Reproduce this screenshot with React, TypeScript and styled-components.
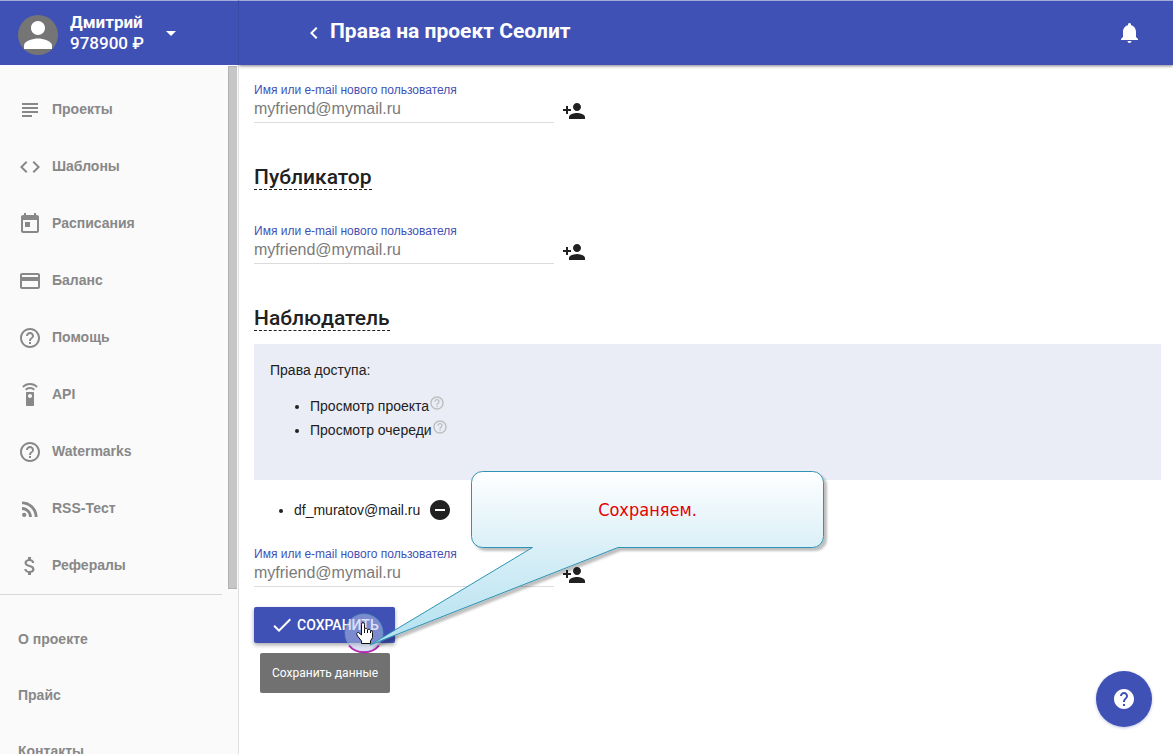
import React, { useId } from "react";
import styled, { createGlobalStyle } from "styled-components";
import {
  MdArrowDropDown,
  MdAttachMoney,
  MdCheck,
  MdChevronLeft,
  MdCode,
  MdHelp,
  MdHelpOutline,
  MdPayment,
  MdPerson,
  MdPersonAdd,
  MdRemoveCircle,
  MdRssFeed,
  MdSettingsRemote,
  MdSubject,
} from "react-icons/md";

const sans = `"Liberation Sans", Arial, sans-serif`;
const roboto = `Roboto, "Liberation Sans", sans-serif`;
const indigo = "#3f51b5";
const ink = "#212121";

const GlobalStyle = createGlobalStyle`
  * { box-sizing: border-box; }
  body { margin: 0; background: #fff; color: ${ink}; font: 14px/20px ${sans}; }
  button { border: 0; padding: 0; background: none; color: inherit; cursor: pointer; }
  svg { display: block; flex: none; }
`;

const Page = styled.div`
  display: grid;
  grid-template-columns: 239px minmax(0, 1fr);
  grid-template-rows: 65px minmax(0, 1fr);
  height: 100vh;
  overflow: hidden;
`;

const Profile = styled.div`
  display: flex;
  align-items: center;
  padding-left: 18px;
  background: ${indigo};
  color: #fff;
  border-top: 1px solid #a3acdb;
  border-right: 1px solid #3a4aa6;
  z-index: 2;
`;

const Avatar = styled.div`
  display: grid;
  place-content: center;
  width: 40px;
  height: 40px;
  margin-top: 4px;
  border-radius: 50%;
  background: #757575;
`;

const Account = styled.div`
  width: 89px;
  margin-left: 12px;
  font: 500 17px/21px ${roboto};
`;

const AccountName = styled.div`
  font-weight: 700;
`;

const IconButton = styled.button`
  display: grid;
  place-items: center;
  width: 24px;
  height: 24px;
`;

const TopBar = styled.header`
  display: flex;
  align-items: center;
  padding: 0 31px 0 63px;
  background: ${indigo};
  color: #fff;
  border-top: 1px solid #a3acdb;
  box-shadow: 0 1px 3px rgba(0, 0, 0, 0.5);
  z-index: 1;
`;

const PageTitle = styled.h1`
  flex: 1;
  margin: 0 0 4px 4px;
  font: 700 21px/24px ${roboto};
`;

const Sidebar = styled.aside`
  display: flex;
  background: #fafafa;
  border-right: 1px solid #e0e0e0;
  padding-right: 1px;
  overflow: hidden;
`;

const Menu = styled.nav`
  flex: 1;
`;

const MenuGroup = styled.div<{ $divided?: boolean }>`
  display: flex;
  flex-direction: column;
  margin-right: 6px;
  padding-top: 16px;
  border-top: ${(p) => (p.$divided ? "1px solid #d8d8d8" : "0")};
`;

const MenuLink = styled.a<{ $height: number }>`
  display: flex;
  align-items: center;
  gap: 10px;
  height: ${(p) => p.$height}px;
  padding-left: 18px;
  color: #888;
  font-weight: 700;
  text-decoration: none;
`;

const MenuText = styled.span`
  padding-bottom: 2px;
`;

const ScrollTrack = styled.div`
  width: 9px;
  padding-top: 1px;
`;

const ScrollThumb = styled.div`
  height: 76%;
  background: #c6c6c6;
  border: 1px solid #b2b2b2;
  border-right: 0;
`;

const Content = styled.main`
  padding: 18px 12px 0 15px;
  overflow: hidden;
`;

const FieldRow = styled.div`
  display: flex;
  align-items: flex-end;
  gap: 8px;
`;

const FieldBox = styled.div`
  display: flex;
  flex-direction: column;
  width: 300px;
`;

const FieldLabel = styled.label`
  color: ${indigo};
  font-size: 12px;
  line-height: 14px;
`;

const FieldInput = styled.input`
  height: 26px;
  padding: 0 0 2px;
  border: 0;
  border-bottom: 1px solid #dcdcdc;
  border-radius: 0;
  background: none;
  font: 16px/23px ${sans};
  outline: none;
  &::placeholder {
    color: #7a7a7a;
    opacity: 1;
  }
`;

const RoleSection = styled.section<{ $gap: number }>`
  margin-top: 42px;
  & > h2 {
    margin: 0 0 ${(p) => p.$gap}px;
  }
`;

const RoleTitle = styled.h2`
  width: fit-content;
  border-bottom: 1px dashed ${ink};
  font: 500 21px/24px ${roboto};
`;

const RightsPanel = styled.div`
  padding: 16px 16px 38px;
  background: #eaedf6;
`;

const RightsTitle = styled.p`
  margin: 0 0 14px;
`;

const BulletList = styled.ul`
  margin: 0;
  padding-left: 40px;
  line-height: 24px;
`;

const RightIcon = styled.span`
  display: inline-block;
  padding-top: 1px;
  vertical-align: top;
  color: #bdbdbd;
`;

const UserList = styled(BulletList)`
  margin: 18px 0 25px;
`;

const UserRow = styled.span`
  display: inline-flex;
  align-items: center;
  gap: 8px;
  height: 24px;
  vertical-align: top;
`;

const SaveArea = styled.div`
  position: relative;
  width: fit-content;
  margin-top: 20px;
`;

const SaveButton = styled.button`
  display: flex;
  align-items: center;
  gap: 3px;
  height: 36px;
  padding: 0 16px;
  border-radius: 2px;
  background: ${indigo};
  color: #fff;
  font: 500 14px/20px ${roboto};
  box-shadow: 0 2px 4px rgba(0, 0, 0, 0.35);
`;

const Tooltip = styled.div`
  position: absolute;
  left: 6px;
  top: 46px;
  padding: 10px 12px;
  border-radius: 2px;
  background: #717171;
  color: #fff;
  font: 400 12px/20px ${roboto};
  white-space: nowrap;
`;

const Callout = styled.div`
  position: absolute;
  left: 86px;
  top: -140px;
  width: 490px;
  height: 196px;
  pointer-events: none;
`;

const CalloutText = styled.p`
  position: absolute;
  left: 131px;
  top: 4px;
  width: 353px;
  margin: 0;
  color: #e60000;
  font: 18px/78px "DejaVu Sans Condensed", "DejaVu Sans", sans-serif;
  text-align: center;
`;

const HelpButton = styled.button`
  position: fixed;
  right: 21px;
  bottom: 27px;
  display: grid;
  place-items: center;
  width: 56px;
  height: 56px;
  border-radius: 50%;
  && {
    background: ${indigo};
    color: #fff;
  }
  box-shadow: 0 1px 3px rgba(63, 81, 181, 0.35);
`;

function CalendarIcon() {
  return (
    <svg width="24" height="24" viewBox="0 0 24 24" fill="currentColor">
      <path d="M19 3h-1V1h-2v2H8V1H6v2H5c-1.110 0-1.990.9-1.990 2L3 19c0 1.100.89 2 2 2h14c1.100 0 2-.9 2-2V5c0-1.100-.9-2-2-2zm0 16H5V8h14v11zM7 10h5v5H7z" />
    </svg>
  );
}

function BellIcon() {
  return (
    <svg width="24" height="24" viewBox="0 0 24 24" fill="currentColor">
      <path d="M11.5 22c1.1 0 2-.9 2-2h-4c0 1.1.9 2 2 2zm6.500-6v-5.500c0-3.070-2.130-5.640-5-6.320V3.500c0-.83-.67-1.500-1.500-1.500S10 2.670 10 3.500v.68c-2.870.68-5 3.250-5 6.320V16l-2 2v1h17v-1l-2-2z" />
    </svg>
  );
}

const primaryLinks = [
  { text: "Проекты", icon: <MdSubject size={24} /> },
  { text: "Шаблоны", icon: <MdCode size={24} /> },
  { text: "Расписания", icon: <CalendarIcon /> },
  { text: "Баланс", icon: <MdPayment size={24} /> },
  { text: "Помощь", icon: <MdHelpOutline size={24} /> },
  { text: "API", icon: <MdSettingsRemote size={24} /> },
  { text: "Watermarks", icon: <MdHelpOutline size={24} /> },
  { text: "RSS-Тест", icon: <MdRssFeed size={24} /> },
  { text: "Рефералы", icon: <MdAttachMoney size={24} /> },
];

const secondaryLinks = ["О проекте", "Прайс", "Контакты"];

function UserField() {
  const id = useId();
  return (
    <FieldRow>
      <FieldBox>
        <FieldLabel htmlFor={id}>Имя или e-mail нового пользователя</FieldLabel>
        <FieldInput id={id} type="email" placeholder="myfriend@mymail.ru" />
      </FieldBox>
      <IconButton type="button" aria-label="Добавить пользователя">
        <MdPersonAdd size={24} />
      </IconButton>
    </FieldRow>
  );
}

function CalloutDrawing() {
  return (
    <svg width="490" height="196" viewBox="340 467 490 196">
      <defs>
        <linearGradient id="bubble" gradientUnits="userSpaceOnUse" x1="0" y1="471" x2="0" y2="645">
          <stop offset="0" stopColor="#ffffff" />
          <stop offset="0.45" stopColor="#d9eff7" />
          <stop offset="1" stopColor="#b2e1f0" />
        </linearGradient>
        <filter id="bubbleShadow" x="-5%" y="-5%" width="110%" height="115%">
          <feDropShadow dx="3" dy="3" stdDeviation="1" floodColor="#000" floodOpacity="0.25" />
        </filter>
      </defs>
      <circle cx="364" cy="633" r="19" fill="#b9c4ea" fillOpacity="0.5" stroke="#57a3b5" strokeOpacity="0.6" />
      <path d="M349 645.500C356 654.500 372 654.500 379 645.500" fill="none" stroke="#b726b0" strokeWidth="2" />
      <path
        d="M482.500 471.500H812.500A11 11 0 0 1 823.500 482.500V536.500A11 11 0 0 1 812.500 547.500H618L370 645L532.500 547.500H482.500A11 11 0 0 1 471.500 536.500V482.500A11 11 0 0 1 482.500 471.500Z"
        fill="url(#bubble)"
        stroke="#2f94b5"
        filter="url(#bubbleShadow)"
      />
      <path
        d="M361.500 624.500Q361.500 622.500 363 622.500Q364.500 622.500 364.500 624.500V628.500Q366.500 627.500 367.500 629.500Q369.500 628.500 370.500 630.500Q372.500 630 372.500 632.500V637.500L370.500 641V643.500H361.500V641L357.500 636Q355.500 632.500 358.500 632.500L361.500 635Z"
        fill="#fff"
        stroke="#111"
      />
      <path d="M364.500 629V633M367.500 630V633M370.500 631V633" stroke="#111" fill="none" />
    </svg>
  );
}

export default function App() {
  return (
    <>
      <GlobalStyle />
      <Page>
        <Profile>
          <Avatar>
            <MdPerson size={42} />
          </Avatar>
          <Account>
            <AccountName>Дмитрий</AccountName>
            <div>978900 ₽</div>
          </Account>
          <IconButton type="button" aria-label="Меню профиля">
            <MdArrowDropDown size={24} />
          </IconButton>
        </Profile>
        <TopBar>
          <IconButton type="button" aria-label="Назад">
            <MdChevronLeft size={24} />
          </IconButton>
          <PageTitle>Права на проект Сеолит</PageTitle>
          <IconButton type="button" aria-label="Уведомления">
            <BellIcon />
          </IconButton>
        </TopBar>
        <Sidebar>
          <Menu>
            <MenuGroup>
              {primaryLinks.map(({ text, icon }) => (
                <MenuLink key={text} href="#" $height={57}>
                  {icon}
                  <MenuText>{text}</MenuText>
                </MenuLink>
              ))}
            </MenuGroup>
            <MenuGroup $divided>
              {secondaryLinks.map((text) => (
                <MenuLink key={text} href="#" $height={56}>
                  {text}
                </MenuLink>
              ))}
            </MenuGroup>
          </Menu>
          <ScrollTrack>
            <ScrollThumb />
          </ScrollTrack>
        </Sidebar>
        <Content>
          <UserField />
          <RoleSection $gap={34}>
            <RoleTitle>Публикатор</RoleTitle>
            <UserField />
          </RoleSection>
          <RoleSection $gap={13}>
            <RoleTitle>Наблюдатель</RoleTitle>
            <RightsPanel>
              <RightsTitle>Права доступа:</RightsTitle>
              <BulletList>
                {["Просмотр проекта", "Просмотр очереди"].map((text) => (
                  <li key={text}>
                    {text}
                    <RightIcon>
                      <MdHelpOutline size={16} />
                    </RightIcon>
                  </li>
                ))}
              </BulletList>
            </RightsPanel>
            <UserList>
              <li>
                <UserRow>
                  df_muratov@mail.ru
                  <IconButton type="button" aria-label="Удалить пользователя">
                    <MdRemoveCircle size={24} />
                  </IconButton>
                </UserRow>
              </li>
            </UserList>
            <UserField />
          </RoleSection>
          <SaveArea>
            <SaveButton type="button">
              <MdCheck size={24} />
              СОХРАНИТЬ
            </SaveButton>
            <Tooltip role="tooltip">Сохранить данные</Tooltip>
            <Callout>
              <CalloutDrawing />
              <CalloutText>Сохраняем.</CalloutText>
            </Callout>
          </SaveArea>
        </Content>
        <HelpButton type="button" aria-label="Помощь">
          <MdHelp size={24} />
        </HelpButton>
      </Page>
    </>
  );
}
